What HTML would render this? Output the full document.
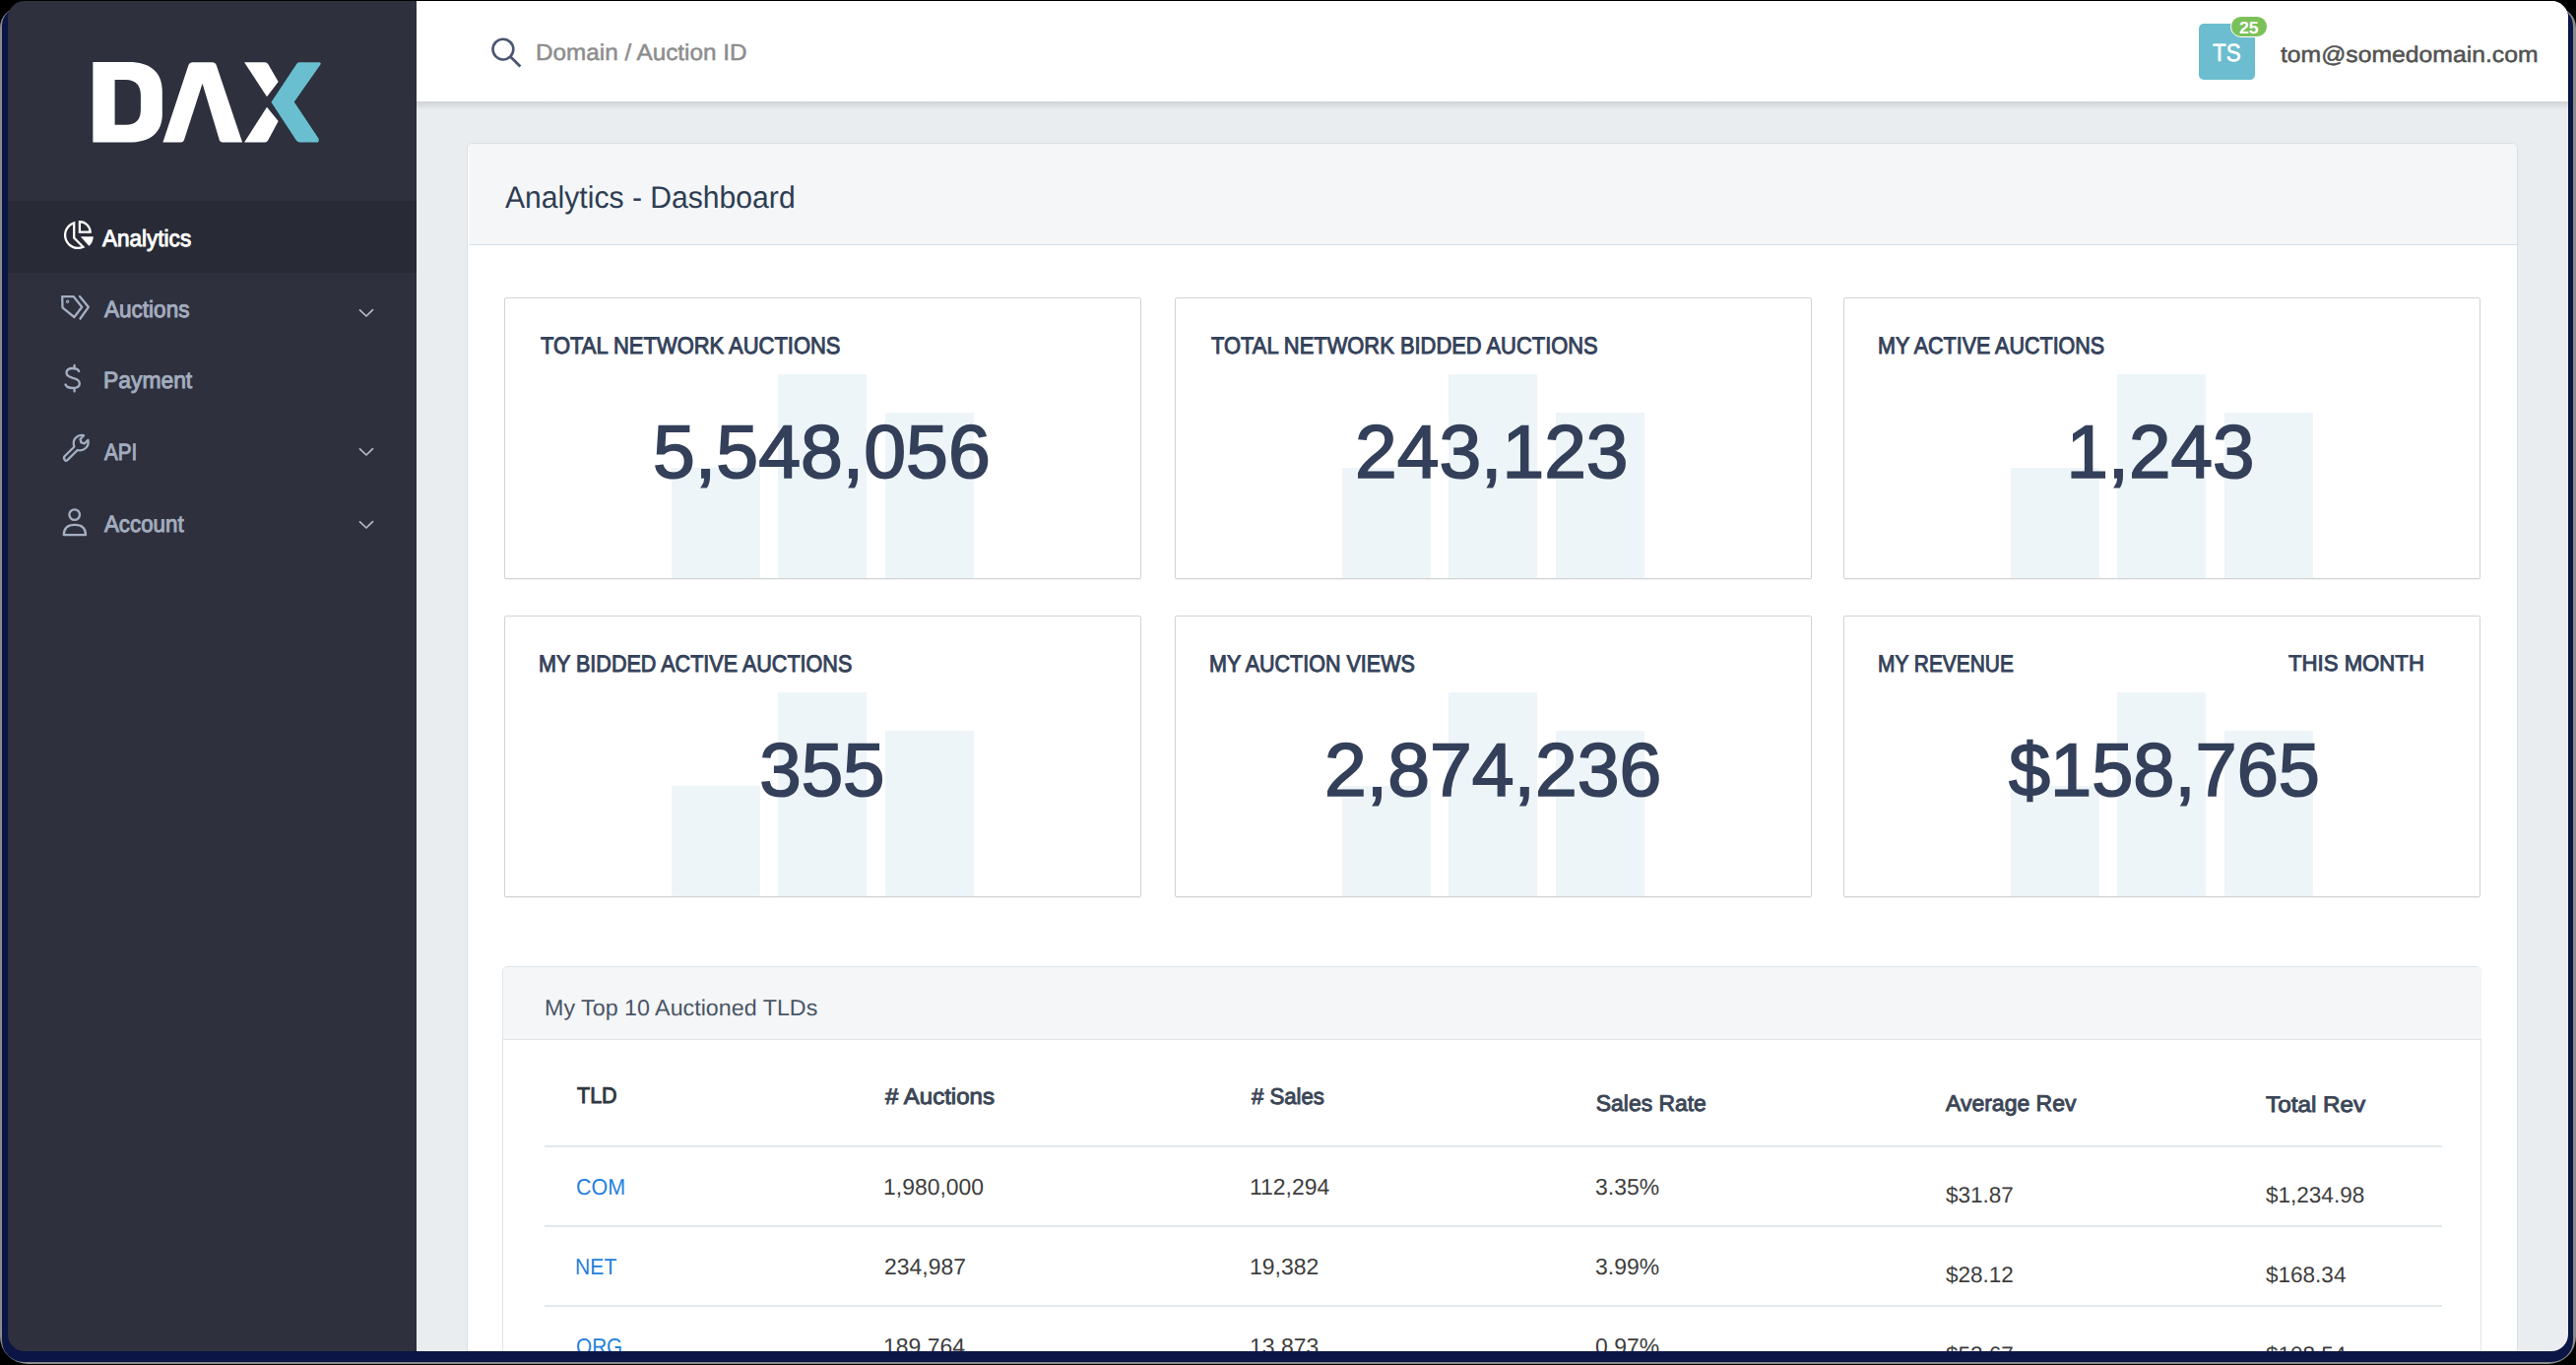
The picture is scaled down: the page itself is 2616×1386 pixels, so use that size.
<!DOCTYPE html>
<html>
<head>
<meta charset="utf-8">
<style>
html,body{margin:0;padding:0;}
body{width:2616px;height:1386px;background:#000;position:relative;overflow:hidden;font-family:"Liberation Sans",sans-serif;}
.a{position:absolute;}
.t{position:absolute;white-space:nowrap;line-height:1;transform-origin:0 0;font-family:"Liberation Sans",sans-serif;text-rendering:geometricPrecision;}
#frame{left:1.5px;top:8px;width:2611.5px;height:1374.5px;background:#0c1646;border-radius:18px 18px 22px 22px;}
#screen{left:8px;top:1px;width:2600px;height:1371px;border-radius:17px;overflow:hidden;}
#page{left:-8px;top:-1px;width:2616px;height:1386px;}
.stat{position:absolute;width:645.5px;height:284px;border:1.5px solid #d3d3d3;background:#fff;box-shadow:0 1px 1px rgba(0,0,0,0.06);border-radius:2px;}
.bar{position:absolute;bottom:0;width:90px;background:#eef5f9;}
.rl{position:absolute;left:553px;width:1927px;height:2px;background:#e1e8ec;}
</style>
</head>
<body>
<div class="a" style="left:0;top:8px;width:2615.5px;height:1377px;background:#8a8a8a;border-radius:20px 20px 28px 28px;"></div>
<div id="frame" class="a"></div>
<div id="screen" class="a">
<div id="page" class="a">
  <div class="a" style="left:400px;top:0;width:2216px;height:1386px;background:#e9edf0;"></div>
  <!-- SIDEBAR -->
  <div class="a" style="left:0;top:0;width:423px;height:1386px;background:#2e303e;"></div>
  <div class="a" style="left:0;top:204px;width:423px;height:73px;background:#282b35;"></div>
  <!-- logo -->
  <svg class="a" style="left:60px;top:40px" width="300" height="130" viewBox="0 0 2576 1116">
    <path fill="#fff" fill-rule="evenodd" d="M295 198 L604 198 C800 198 900 290 900 450 L900 650 C900 810 800 898 604 898 L295 898 Z M486 351 L581 351 C672 351 712 405 712 485 L712 612 C712 700 672 745 581 745 L486 745 Z"/>
    <path fill="#fff" d="M905 898 L1128 225 Q1138 200 1165 200 L1335 200 Q1362 200 1372 225 L1598 898 L1425 898 Q1405 898 1398 878 L1250 385 L1090 878 Q1083 898 1062 898 Z"/>
    <path fill="#fff" d="M1615 200 L1795 200 Q1812 200 1822 215 L1912 370 L1812 500 Z"/>
    <path fill="#fff" d="M1615 898 L1812 590 L1912 712 L1822 880 Q1812 898 1795 898 Z"/>
    <path fill="#69bfcf" d="M2095 200 L2270 200 Q2290 205 2278 222 L2050 545 L2262 862 Q2272 898 2245 898 L2100 898 Q2080 898 2068 880 L1850 548 L2068 218 Q2078 200 2095 200 Z"/>
  </svg>
  <!-- nav icons -->
  <svg class="a" style="left:0;top:0" width="423" height="600" viewBox="0 0 423 600">
    <g fill="none" stroke="#ffffff" stroke-width="2.3">
      <path d="M75.2 226.3 A13.1 13.1 0 1 0 84.4 250.8 L75.2 241.6 Z"/>
      <path d="M80.9 235.6 L80.9 225.2 A10.8 10.8 0 0 1 91.7 235.6 Z"/>
    </g>
    <path fill="#ffffff" d="M81.8 240.2 L94.8 240.2 Q94.6 246 90.4 249.8 Z"/>
    <g fill="none" stroke="#a5afc2" stroke-width="2.3" stroke-linejoin="round" stroke-linecap="round">
      <path d="M63.2 301.2 L74.8 301.2 L83.2 311.8 L75.4 322 L63.5 312.4 Z"/><circle cx="68.6" cy="306.3" r="0.6"/>
      <path d="M81 301 L89.8 311.8 L81.5 323.5"/>
      <path d="M75.6 371 L75.6 374.5 M80.2 377 C79 374.5 77 374 74 374 C70 374 67.5 375.5 67.5 378.5 C67.5 382 71 383 74 383.8 C77.5 384.6 80.8 385.5 80.8 389.5 C80.8 392.5 78 394 74 394 C70 394 67.5 393 66.5 390.5 M75.6 394 L75.6 397.5"/>
      <path d="M66.3 467.5 Q64 465.5 65.6 463.3 L75.3 453.7 Q73.5 448 77 444.3 Q80.5 441 85 442.2 L81.5 446 L82.5 449.3 L85.8 450.3 L89.4 446.7 Q90.5 451.5 87 455 Q83.5 458.2 78.7 457 L69 466.6 Q67.5 468.5 66.3 467.5 Z"/>
      <circle cx="75.7" cy="522.6" r="5.3"/>
      <path d="M64.8 543.2 L87 543.2 Q87 532.8 75.9 532.8 Q64.8 532.8 64.8 543.2 Z"/>
    </g>
    <g fill="none" stroke="#b3bbca" stroke-width="1.7" stroke-linecap="round" stroke-linejoin="round">
      <path d="M365.5 314.8 L372 321 L378.5 314.6"/>
      <path d="M365.5 455.8 L372 462 L378.5 455.6"/>
      <path d="M365.5 529.8 L372 536 L378.5 529.6"/>
    </g>
  </svg>
  <!-- HEADER -->
  <div class="a" style="left:423px;top:102px;width:2193px;height:10px;background:linear-gradient(#cdcfd2,#e9edf0);"></div>
  <div class="a" style="left:423px;top:0;width:2193px;height:102.5px;background:#fff;"></div>
  <svg class="a" style="left:490px;top:30px" width="50" height="45" viewBox="490 30 50 45">
    <circle cx="510.9" cy="50.1" r="10.4" fill="none" stroke="#4a5670" stroke-width="2.6"/>
    <path d="M518.8 58 L527.4 66.6" stroke="#4a5670" stroke-width="2.8" stroke-linecap="square"/>
  </svg>
  <div class="a" style="left:2232.6px;top:23.5px;width:57.4px;height:57.8px;background:#6bbdcf;border-radius:5px;"></div>
  <div class="a" style="left:2265px;top:16.2px;width:36.2px;height:20px;background:#7bc15a;border-radius:12px;border:1.6px solid #fff;"></div>
  <!-- MAIN CARD -->
  <div class="a" style="left:474px;top:144.5px;width:2080.5px;height:1400px;background:#fff;border:1.5px solid #d6dfe6;border-radius:6px;"></div>
  <div class="a" style="left:475.5px;top:146px;width:2080.5px;height:101.5px;background:#f4f6f8;border-bottom:1.5px solid #d6dfe6;border-radius:5px 5px 0 0;"></div>
  <!-- STAT CARDS -->
  <div class="stat" style="left:511.5px;top:301.5px;"><div class="bar" style="left:169.3px;height:112px"></div><div class="bar" style="left:277.8px;height:206.5px"></div><div class="bar" style="left:386.3px;height:168px"></div></div>
  <div class="stat" style="left:1192.5px;top:301.5px;"><div class="bar" style="left:169.3px;height:112px"></div><div class="bar" style="left:277.8px;height:206.5px"></div><div class="bar" style="left:386.3px;height:168px"></div></div>
  <div class="stat" style="left:1871.5px;top:301.5px;"><div class="bar" style="left:169.3px;height:112px"></div><div class="bar" style="left:277.8px;height:206.5px"></div><div class="bar" style="left:386.3px;height:168px"></div></div>
  <div class="stat" style="left:511.5px;top:624.5px;"><div class="bar" style="left:169.3px;height:112px"></div><div class="bar" style="left:277.8px;height:206.5px"></div><div class="bar" style="left:386.3px;height:168px"></div></div>
  <div class="stat" style="left:1192.5px;top:624.5px;"><div class="bar" style="left:169.3px;height:112px"></div><div class="bar" style="left:277.8px;height:206.5px"></div><div class="bar" style="left:386.3px;height:168px"></div></div>
  <div class="stat" style="left:1871.5px;top:624.5px;"><div class="bar" style="left:169.3px;height:112px"></div><div class="bar" style="left:277.8px;height:206.5px"></div><div class="bar" style="left:386.3px;height:168px"></div></div>
  <!-- TABLE CARD -->
  <div class="a" style="left:509.5px;top:980.5px;width:2008.5px;height:600px;background:#fff;border:1.5px solid #dee5ea;border-radius:5px;"></div>
  <div class="a" style="left:511px;top:982px;width:2008.5px;height:72.5px;background:#f4f6f8;border-bottom:1.5px solid #dee5ea;border-radius:4px 4px 0 0;"></div>
  <div class="rl" style="top:1163px"></div>
  <div class="rl" style="top:1243.8px"></div>
  <div class="rl" style="top:1325px"></div>
  <div class="t" style="left:544.22px;top:41.76px;font-size:23.19px;font-weight:400;-webkit-text-stroke:0.51px #8d8d8d;color:#8d8d8d;transform:scaleX(1.0469);">Domain / Auction ID</div>
<div class="t" style="left:2246.69px;top:42.46px;font-size:24.93px;font-weight:400;-webkit-text-stroke:0.55px #ffffff;color:#ffffff;transform:scaleX(0.9003);">TS</div>
<div class="t" style="left:2273.86px;top:20.22px;font-size:17.25px;font-weight:700;color:#ffffff;transform:scaleX(1.0276);">25</div>
<div class="t" style="left:2316.30px;top:43.72px;font-size:22.83px;font-weight:400;-webkit-text-stroke:0.50px #525252;color:#525252;transform:scaleX(1.0833);">tom@somedomain.com</div>
<div class="t" style="left:513.46px;top:184.90px;font-size:31.45px;font-weight:400;color:#2e3d52;transform:scaleX(0.9581);">Analytics - Dashboard</div>
<div class="t" style="left:104.34px;top:231.84px;font-size:23.62px;font-weight:400;-webkit-text-stroke:0.94px #ffffff;color:#ffffff;transform:scaleX(0.9542);">Analytics</div>
<div class="t" style="left:105.74px;top:304.04px;font-size:23.62px;font-weight:400;-webkit-text-stroke:0.94px #a3adbf;color:#a3adbf;transform:scaleX(0.9544);">Auctions</div>
<div class="t" style="left:104.95px;top:376.04px;font-size:23.62px;font-weight:400;-webkit-text-stroke:0.94px #a3adbf;color:#a3adbf;transform:scaleX(0.9683);">Payment</div>
<div class="t" style="left:105.71px;top:449.04px;font-size:23.62px;font-weight:400;-webkit-text-stroke:0.94px #a3adbf;color:#a3adbf;transform:scaleX(0.8740);">API</div>
<div class="t" style="left:105.74px;top:521.64px;font-size:23.62px;font-weight:400;-webkit-text-stroke:0.94px #a3adbf;color:#a3adbf;transform:scaleX(0.9446);">Account</div>
<div class="t" style="left:548.50px;top:340.28px;font-size:24.06px;font-weight:400;-webkit-text-stroke:0.96px #34425a;color:#34425a;transform:scaleX(0.9129);">TOTAL NETWORK AUCTIONS</div>
<div class="t" style="left:662.91px;top:422.27px;font-size:76.38px;font-weight:400;-webkit-text-stroke:1.68px #34405a;color:#34405a;transform:scaleX(1.0092);">5,548,056</div>
<div class="t" style="left:1229.50px;top:340.28px;font-size:24.06px;font-weight:400;-webkit-text-stroke:0.96px #34425a;color:#34425a;transform:scaleX(0.9109);">TOTAL NETWORK BIDDED AUCTIONS</div>
<div class="t" style="left:1375.58px;top:422.27px;font-size:76.38px;font-weight:400;-webkit-text-stroke:1.68px #34405a;color:#34405a;transform:scaleX(1.0055);">243,123</div>
<div class="t" style="left:1907.30px;top:340.28px;font-size:24.06px;font-weight:400;-webkit-text-stroke:0.96px #34425a;color:#34425a;transform:scaleX(0.8942);">MY ACTIVE AUCTIONS</div>
<div class="t" style="left:2098.40px;top:422.27px;font-size:76.38px;font-weight:400;-webkit-text-stroke:1.68px #34405a;color:#34405a;">1,243</div>
<div class="t" style="left:547.29px;top:663.28px;font-size:24.06px;font-weight:400;-webkit-text-stroke:0.96px #34425a;color:#34425a;transform:scaleX(0.8966);">MY BIDDED ACTIVE AUCTIONS</div>
<div class="t" style="left:771.20px;top:745.27px;font-size:76.38px;font-weight:400;-webkit-text-stroke:1.68px #34405a;color:#34405a;">355</div>
<div class="t" style="left:1228.30px;top:663.28px;font-size:24.06px;font-weight:400;-webkit-text-stroke:0.96px #34425a;color:#34425a;transform:scaleX(0.8947);">MY AUCTION VIEWS</div>
<div class="t" style="left:1345.18px;top:745.27px;font-size:76.38px;font-weight:400;-webkit-text-stroke:1.68px #34405a;color:#34405a;transform:scaleX(1.0078);">2,874,236</div>
<div class="t" style="left:1907.33px;top:663.28px;font-size:24.06px;font-weight:400;-webkit-text-stroke:0.96px #34425a;color:#34425a;transform:scaleX(0.8694);">MY REVENUE</div>
<div class="t" style="left:2039.50px;top:745.27px;font-size:76.38px;font-weight:400;-webkit-text-stroke:1.68px #34405a;color:#34405a;transform:scaleX(0.9918);">$158,765</div>
<div class="t" style="left:2323.90px;top:661.93px;font-size:22.75px;font-weight:400;-webkit-text-stroke:0.91px #34425a;color:#34425a;transform:scaleX(0.9743);">THIS MONTH</div>
<div class="t" style="left:553.45px;top:1011.93px;font-size:22.75px;font-weight:400;color:#4a5565;transform:scaleX(1.0229);">My Top 10 Auctioned TLDs</div>
<div class="t" style="left:586.10px;top:1100.51px;font-size:22.90px;font-weight:400;-webkit-text-stroke:0.92px #2e3640;color:#2e3640;transform:scaleX(0.9396);">TLD</div>
<div class="t" style="left:899.19px;top:1101.71px;font-size:22.90px;font-weight:400;-webkit-text-stroke:0.92px #3b4656;color:#3b4656;transform:scaleX(1.0505);"># Auctions</div>
<div class="t" style="left:1271.05px;top:1101.71px;font-size:22.90px;font-weight:400;-webkit-text-stroke:0.92px #3b4656;color:#3b4656;transform:scaleX(0.9677);"># Sales</div>
<div class="t" style="left:1620.83px;top:1109.11px;font-size:22.90px;font-weight:400;-webkit-text-stroke:0.92px #3b4656;color:#3b4656;">Sales Rate</div>
<div class="t" style="left:1976.26px;top:1109.31px;font-size:22.90px;font-weight:400;-webkit-text-stroke:0.92px #3b4656;color:#3b4656;transform:scaleX(1.0041);">Average Rev</div>
<div class="t" style="left:2301.40px;top:1110.51px;font-size:22.61px;font-weight:400;-webkit-text-stroke:0.90px #3b4656;color:#3b4656;transform:scaleX(1.0736);">Total Rev</div>
<div class="t" style="left:584.98px;top:1194.08px;font-size:23.04px;font-weight:400;color:#1f80dc;transform:scaleX(0.9330);">COM</div>
<div class="t" style="left:897.03px;top:1194.08px;font-size:23.04px;font-weight:400;color:#3d3d3d;transform:scaleX(0.9961);">1,980,000</div>
<div class="t" style="left:1269.33px;top:1194.08px;font-size:23.04px;font-weight:400;color:#3d3d3d;transform:scaleX(0.9961);">112,294</div>
<div class="t" style="left:1620.00px;top:1194.08px;font-size:23.04px;font-weight:400;color:#3d3d3d;transform:scaleX(0.9961);">3.35%</div>
<div class="t" style="left:1975.67px;top:1202.91px;font-size:22.61px;font-weight:400;color:#3d3d3d;transform:scaleX(0.9961);">$31.87</div>
<div class="t" style="left:2301.17px;top:1202.91px;font-size:22.61px;font-weight:400;color:#3d3d3d;transform:scaleX(0.9961);">$1,234.98</div>
<div class="t" style="left:584.16px;top:1275.08px;font-size:23.04px;font-weight:400;color:#1f80dc;transform:scaleX(0.9182);">NET</div>
<div class="t" style="left:897.66px;top:1275.08px;font-size:23.04px;font-weight:400;color:#3d3d3d;transform:scaleX(0.9961);">234,987</div>
<div class="t" style="left:1269.33px;top:1275.08px;font-size:23.04px;font-weight:400;color:#3d3d3d;transform:scaleX(0.9961);">19,382</div>
<div class="t" style="left:1620.00px;top:1275.08px;font-size:23.04px;font-weight:400;color:#3d3d3d;transform:scaleX(0.9961);">3.99%</div>
<div class="t" style="left:1975.67px;top:1283.91px;font-size:22.61px;font-weight:400;color:#3d3d3d;transform:scaleX(0.9961);">$28.12</div>
<div class="t" style="left:2301.17px;top:1283.91px;font-size:22.61px;font-weight:400;color:#3d3d3d;transform:scaleX(0.9961);">$168.34</div>
<div class="t" style="left:585.10px;top:1356.08px;font-size:23.04px;font-weight:400;color:#1f80dc;transform:scaleX(0.9008);">ORG</div>
<div class="t" style="left:897.03px;top:1356.08px;font-size:23.04px;font-weight:400;color:#3d3d3d;transform:scaleX(0.9961);">189,764</div>
<div class="t" style="left:1269.33px;top:1356.08px;font-size:23.04px;font-weight:400;color:#3d3d3d;transform:scaleX(0.9961);">13,873</div>
<div class="t" style="left:1620.00px;top:1356.08px;font-size:23.04px;font-weight:400;color:#3d3d3d;transform:scaleX(0.9961);">0.97%</div>
<div class="t" style="left:1975.67px;top:1364.91px;font-size:22.61px;font-weight:400;color:#3d3d3d;transform:scaleX(0.9961);">$52.67</div>
<div class="t" style="left:2301.17px;top:1364.91px;font-size:22.61px;font-weight:400;color:#3d3d3d;transform:scaleX(0.9961);">$108.54</div>
</div>
</div>
</body>
</html>
